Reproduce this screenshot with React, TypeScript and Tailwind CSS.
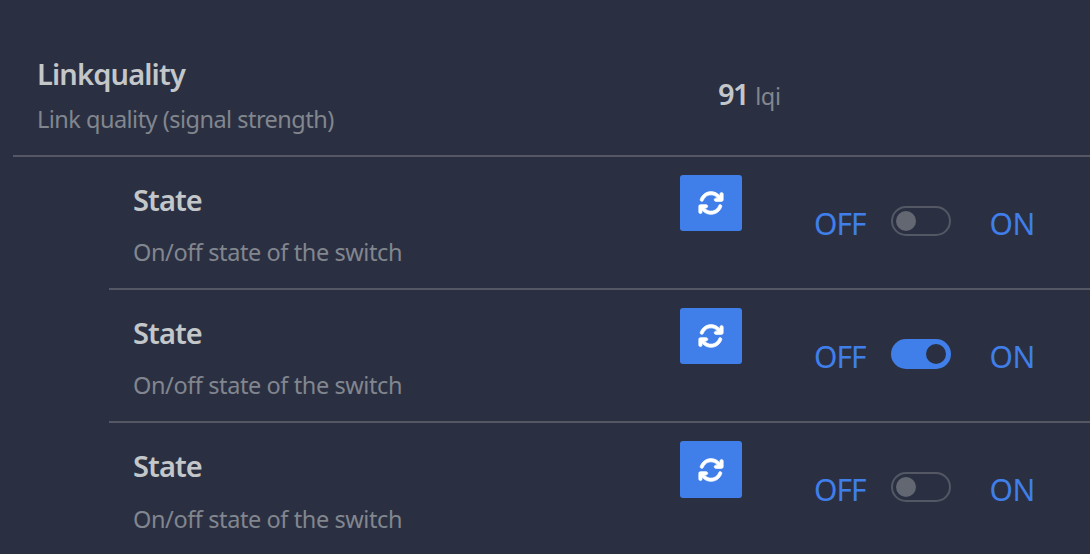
import React from "react";
import { FaArrowsRotate } from "react-icons/fa6";

type StateRowProps = { on: boolean; tall?: boolean };

function Toggle({ on }: { on: boolean }) {
  return (
    <span
      role="switch"
      aria-checked={on}
      className={
        on
          ? "flex h-[30px] w-[60px] items-center justify-end rounded-full bg-[#407fe9] px-[5px]"
          : "flex h-[30px] w-[60px] items-center rounded-full border-2 border-[#535864] px-[3px]"
      }
    >
      <span className={on ? "size-5 rounded-full bg-[#2a3042]" : "size-5 rounded-full bg-[#636772]"} />
    </span>
  );
}

function StateRow({ on, tall }: StateRowProps) {
  return (
    <section className="ml-[109px] flex h-[133px] shrink-0 items-start border-b-2 border-[#535864]">
      <div className="w-[571px] pl-6 pt-[23px]">
        <h2 className="text-[29px] leading-10 font-semibold tracking-[-0.9px] text-[#c3c7c9]">State</h2>
        <p
          className={
            tall
              ? "mt-[17px] text-[23.5px] leading-8 tracking-[-0.41px] text-[#82868e]"
              : "mt-[16px] text-[23.5px] leading-8 tracking-[-0.41px] text-[#82868e]"
          }
        >
          On/off state of the switch
        </p>
      </div>
      <button
        aria-label="Refresh"
        className={
          tall
            ? "mt-[18px] flex h-[57px] w-[62px] items-center justify-center rounded-[3px] bg-[#407fe9] text-white"
            : "mt-[18px] flex h-14 w-[62px] items-center justify-center rounded-[3px] bg-[#407fe9] text-white"
        }
      >
        <FaArrowsRotate className="size-[26px] overflow-visible stroke-current stroke-[14px]" />
      </button>
      <div className="ml-[72px] flex pt-[47px] text-[30px] leading-10 text-[#407fe9]">
        <span className="w-[77px] tracking-[-1px]">OFF</span>
        <span className="mt-[2px]">
          <Toggle on={on} />
        </span>
        <span className="ml-[38.5px] tracking-[-0.5px]">ON</span>
      </div>
    </section>
  );
}

export default function App() {
  return (
    <main className="flex h-[554px] w-[1090px] flex-col overflow-hidden bg-[#2a3042] font-['Noto_Sans',sans-serif]">
      <section className="ml-[13px] flex h-[157px] shrink-0 border-b-2 border-[#535864]">
        <div className="w-[705px] pl-6 pt-[54px]">
          <h1 className="text-[29px] leading-10 font-semibold tracking-[-0.85px] text-[#c3c7c9]">Linkquality</h1>
          <p className="mt-[9px] text-[23.5px] leading-8 tracking-[-0.52px] text-[#82868e]">
            Link quality (signal strength)
          </p>
        </div>
        <div className="flex items-baseline gap-[7px] pt-[74px] leading-10">
          <strong className="text-[29px] font-semibold tracking-[-1.5px] text-[#c3c7c9]">91</strong>
          <span className="text-[23.5px] tracking-[-0.4px] text-[#82868e]">lqi</span>
        </div>
      </section>
      <StateRow on={false} />
      <StateRow on={true} />
      <StateRow on={false} tall />
    </main>
  );
}
